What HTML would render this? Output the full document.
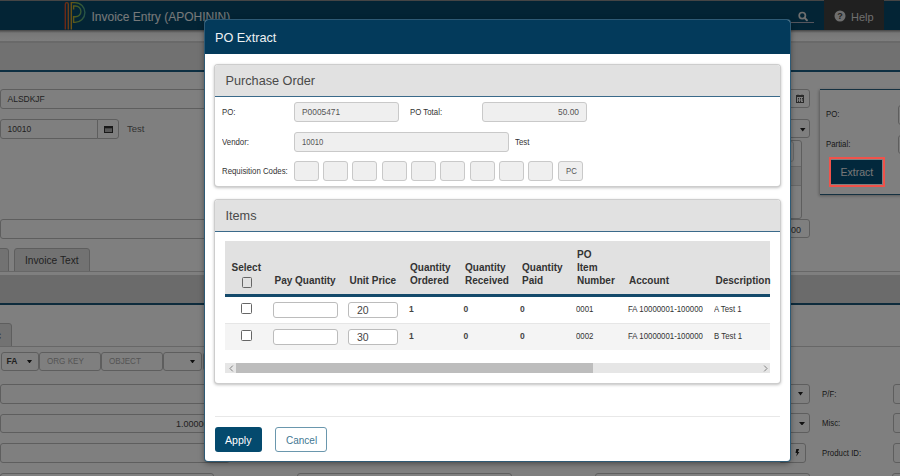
<!DOCTYPE html>
<html><head><meta charset="utf-8">
<style>
*{box-sizing:border-box;margin:0;padding:0}
html,body{width:900px;height:476px;overflow:hidden;background:#fff;font-family:"Liberation Sans",sans-serif}
.a{position:absolute}
.t{position:absolute;line-height:1;white-space:nowrap}
#page{position:absolute;left:0;top:0;width:900px;height:476px;background:#fff;overflow:hidden}
#overlay{position:absolute;left:0;top:0;width:900px;height:476px;background:rgba(0,0,0,0.5)}
#modal{position:absolute;left:205px;top:20px;width:585px;height:441px;background:#fff;border-radius:3px;box-shadow:0 0 0 1px #2e5a75,0 2px 6px rgba(0,0,0,0.5);overflow:hidden}
</style></head><body>
<div id="page">
<div class="a" style="left:0px;top:0px;width:900px;height:30px;background:#06496a;border-top:1px solid #8a8a8a"></div>
<div class="a" style="left:824px;top:0px;width:60px;height:30px;background:#404040"></div>
<svg class="a" style="left:60px;top:0px" width="40" height="32" viewBox="0 0 40 32">
<defs><linearGradient id="lg" x1="4" y1="0" x2="26" y2="0" gradientUnits="userSpaceOnUse">
<stop offset="0" stop-color="#d8412f"/><stop offset="0.18" stop-color="#d9702c"/><stop offset="0.36" stop-color="#d2aa2a"/><stop offset="0.6" stop-color="#8ab848"/><stop offset="1" stop-color="#45a89a"/></linearGradient></defs>
<g fill="none" stroke="url(#lg)" stroke-width="1.4">
<path d="M5.3 29.5V4.2Q5.3 2.6 6.8 2.6Q8.3 2.6 8.3 4.2V29.5"/>
<path d="M11.3 29.5V2.6H15A9.9 9.9 0 0 1 15 22.4H13.6V16.8H15.5A5.4 5.4 0 0 0 15.5 6H13.6V9.5"/>
</g></svg>
<div class="t" style="left:91.5px;top:11px;font-size:12px;font-weight:normal;color:#eef2f4;">Invoice Entry (APOHININ)</div>
<svg class="a" style="left:796px;top:9px" width="14" height="14" viewBox="0 0 14 14"><circle cx="6.3" cy="6.6" r="3.1" fill="none" stroke="#ddd" stroke-width="1.7"/><path d="M8.6 8.9L10.9 11.2" stroke="#ddd" stroke-width="2" stroke-linecap="round"/></svg>
<div class="a" style="left:788px;top:22px;width:26px;height:1px;background:#aab"></div>
<svg class="a" style="left:834px;top:10px" width="12" height="12" viewBox="0 0 12 12"><circle cx="6" cy="6" r="5.5" fill="#ddd"/><text x="6" y="9.3" font-family="Liberation Sans" font-weight="bold" font-size="9" text-anchor="middle" fill="#454545">?</text></svg>
<div class="t" style="left:851px;top:12px;font-size:11px;font-weight:normal;color:#ddd;">Help</div>
<div class="a" style="left:0px;top:30px;width:900px;height:11px;background:linear-gradient(#8a8a8a,#eeeeee 3px,#fcfcfc)"></div>
<div class="a" style="left:0px;top:41px;width:900px;height:2px;background:#d2d2d2"></div>
<div class="a" style="left:0px;top:43px;width:900px;height:27px;background:#e2e2e2"></div>
<div class="a" style="left:0px;top:70px;width:900px;height:1.5px;background:#1b5e84"></div>
<div class="a" style="left:0px;top:89px;width:230px;height:20px;background:#fff;border:1px solid #bdbdbd;border-radius:3px"></div>
<div class="t" style="left:7.5px;top:95px;font-size:8.5px;font-weight:normal;color:#444;">ALSDKJF</div>
<div class="a" style="left:0px;top:119px;width:98px;height:20px;background:#fff;border:1px solid #bdbdbd;border-radius:3px 0 0 3px"></div>
<div class="t" style="left:7.5px;top:125px;font-size:8.5px;font-weight:normal;color:#444;">10010</div>
<div class="a" style="left:97px;top:119px;width:22px;height:20px;background:#fff;border:1px solid #bdbdbd;border-radius:0 3px 3px 0"></div>
<svg class="a" style="left:103.5px;top:125.5px" width="9" height="7" viewBox="0 0 9 7"><rect x="0.5" y="0.5" width="8" height="6" fill="#b0b0b0" stroke="#333" stroke-width="1"/><rect x="0.5" y="0.5" width="8" height="1.8" fill="#333"/></svg>
<div class="t" style="left:127px;top:124px;font-size:9.5px;font-weight:normal;color:#666;">Test</div>
<div class="a" style="left:0px;top:219px;width:230px;height:20px;background:#fff;border:1px solid #bdbdbd;border-radius:3px"></div>
<div class="a" style="left:-10px;top:248px;width:19px;height:24px;background:#e4e4e4;border:1px solid #bdbdbd;border-radius:3px 3px 0 0"></div>
<div class="a" style="left:14px;top:248px;width:76px;height:24px;background:#e4e4e4;border:1px solid #bdbdbd;border-radius:3px 3px 0 0"></div>
<div class="t" style="left:25px;top:256px;font-size:10.2px;font-weight:normal;color:#444;">Invoice Text</div>
<div class="a" style="left:0px;top:271px;width:900px;height:1px;background:#cfcfcf"></div>
<div class="a" style="left:0px;top:275px;width:900px;height:29px;background:#d6d6d6"></div>
<div class="a" style="left:0px;top:303px;width:900px;height:2px;background:#1b5678"></div>
<div class="a" style="left:-10px;top:323px;width:22px;height:24px;background:#e4e4e4;border:1px solid #bdbdbd;border-radius:3px 3px 0 0"></div>
<div class="t" style="left:-4px;top:331px;font-size:10px;font-weight:normal;color:#444;">c</div>
<div class="a" style="left:0px;top:346px;width:900px;height:1px;background:#cfcfcf"></div>
<div class="a" style="left:1px;top:351.5px;width:38px;height:19px;background:#fff;border:1px solid #bdbdbd;border-radius:3px"></div>
<div class="t" style="left:6.5px;top:356.5px;font-size:8.5px;font-weight:bold;color:#444;">FA</div>
<svg class="a" style="left:27px;top:359.5px" width="5" height="3.5" viewBox="0 0 5 3.5"><path d="M0 0H5L2.5 3.5Z" fill="#222"/></svg>
<div class="a" style="left:39px;top:351.5px;width:62px;height:19px;background:#fff;border:1px solid #bdbdbd;border-radius:3px"></div>
<div class="t" style="left:47px;top:356.5px;font-size:8.5px;font-weight:normal;color:#aaa;transform:scaleX(0.95);transform-origin:0 0;">ORG KEY</div>
<div class="a" style="left:101px;top:351.5px;width:62px;height:19px;background:#fff;border:1px solid #bdbdbd;border-radius:3px"></div>
<div class="t" style="left:109px;top:356.5px;font-size:8.5px;font-weight:normal;color:#aaa;transform:scaleX(0.95);transform-origin:0 0;">OBJECT</div>
<div class="a" style="left:163px;top:351.5px;width:39px;height:19px;background:#fff;border:1px solid #bdbdbd;border-radius:3px"></div>
<svg class="a" style="left:190px;top:359.5px" width="5" height="3.5" viewBox="0 0 5 3.5"><path d="M0 0H5L2.5 3.5Z" fill="#222"/></svg>
<div class="a" style="left:203px;top:351.5px;width:20px;height:19px;background:#fff;border:1px solid #bdbdbd;border-radius:3px"></div>
<div class="a" style="left:0px;top:384px;width:230px;height:19.5px;background:#fff;border:1px solid #bdbdbd;border-radius:3px"></div>
<div class="a" style="left:0px;top:413.5px;width:230px;height:19px;background:#fff;border:1px solid #bdbdbd;border-radius:3px"></div>
<div class="t" style="left:176px;top:420px;font-size:9px;font-weight:normal;color:#444;">1.000000</div>
<div class="a" style="left:0px;top:443px;width:230px;height:19.5px;background:#fff;border:1px solid #bdbdbd;border-radius:3px"></div>
<div class="a" style="left:0px;top:472.5px;width:214px;height:20px;background:#fff;border:1px solid #bdbdbd;border-radius:3px"></div>
<div class="a" style="left:780px;top:89px;width:30px;height:19px;background:#fff;border:1px solid #bdbdbd;border-radius:0 3px 3px 0"></div>
<svg class="a" style="left:796px;top:94px" width="8" height="9" viewBox="0 0 8 9"><rect x="0.5" y="1.5" width="7" height="7" fill="none" stroke="#555" stroke-width="1"/><rect x="0.5" y="1.5" width="7" height="1.5" fill="#555"/><path d="M2 4.5h1M4 4.5h1M6 4.5h1M2 6h1M4 6h1M6 6h1M2 7.5h1M4 7.5h1" stroke="#555" stroke-width="1"/><path d="M2 0.5v1.5M6 0.5v1.5" stroke="#555" stroke-width="1"/></svg>
<div class="a" style="left:780px;top:119px;width:30px;height:19px;background:#fff;border:1px solid #bdbdbd;border-radius:0 3px 3px 0"></div>
<svg class="a" style="left:800px;top:128px" width="5.5" height="3.5" viewBox="0 0 5.5 3.5"><path d="M0 0H5.5L2.75 3.5Z" fill="#222"/></svg>
<div class="a" style="left:770px;top:139.5px;width:32px;height:79px;background:#fff;border:1px solid #bdbdbd;border-radius:0 3px 3px 0"></div>
<div class="a" style="left:770px;top:140.5px;width:24px;height:21.5px;background:#fff;border:1px solid #d0d0d0;border-radius:3px"></div>
<div class="a" style="left:770px;top:166px;width:31px;height:20px;background:#ececec;border-top:1px solid #d0d0d0;border-bottom:1px solid #d0d0d0"></div>
<div class="a" style="left:780px;top:219px;width:30px;height:19px;background:#fff;border:1px solid #bdbdbd;border-radius:0 3px 3px 0"></div>
<div class="t" style="left:791px;top:226px;font-size:9px;font-weight:normal;color:#444;">00</div>
<div class="a" style="left:820px;top:89px;width:100px;height:106px;background:#fff;border-top:1.5px solid #2a6282;border-bottom:1.5px solid #2a6282;box-shadow:-1px 1px 3px rgba(0,0,0,0.3)"></div>
<div class="t" style="left:826px;top:110px;font-size:9px;font-weight:normal;color:#333;transform:scaleX(0.87);transform-origin:0 0;">PO:</div>
<div class="a" style="left:898px;top:105px;width:20px;height:19.5px;background:#fff;border:1px solid #bdbdbd;border-radius:3px"></div>
<div class="t" style="left:826px;top:140px;font-size:9px;font-weight:normal;color:#333;transform:scaleX(0.87);transform-origin:0 0;">Partial:</div>
<div class="a" style="left:898px;top:135px;width:20px;height:19px;background:#fff;border:1px solid #bdbdbd;border-radius:3px"></div>
<div class="a" style="left:831px;top:159.5px;width:51px;height:24.5px;background:#045078"></div>
<div class="t" style="left:840.5px;top:167px;font-size:10.5px;font-weight:normal;color:#eee;">Extract</div>
<div class="a" style="left:780px;top:384px;width:30px;height:20px;background:#fff;border:1px solid #bdbdbd;border-radius:0 3px 3px 0"></div>
<svg class="a" style="left:798px;top:392px" width="5" height="3.5" viewBox="0 0 5 3.5"><path d="M0 0H5L2.5 3.5Z" fill="#222"/></svg>
<div class="t" style="left:821.5px;top:389.5px;font-size:9px;font-weight:normal;color:#333;transform:scaleX(0.87);transform-origin:0 0;">P/F:</div>
<div class="a" style="left:893px;top:384px;width:20px;height:20px;background:#fff;border:1px solid #bdbdbd;border-radius:3px"></div>
<div class="a" style="left:780px;top:413px;width:30px;height:20px;background:#fff;border:1px solid #bdbdbd;border-radius:0 3px 3px 0"></div>
<svg class="a" style="left:799px;top:421.5px" width="6" height="3.5" viewBox="0 0 6 3.5"><path d="M0 0H6L3.0 3.5Z" fill="#222"/></svg>
<div class="t" style="left:821.5px;top:418.5px;font-size:9px;font-weight:normal;color:#333;transform:scaleX(0.87);transform-origin:0 0;">Misc:</div>
<div class="a" style="left:893px;top:413px;width:20px;height:20px;background:#fff;border:1px solid #bdbdbd;border-radius:3px"></div>
<div class="a" style="left:780px;top:443px;width:26px;height:20px;background:#fff;border:1px solid #bdbdbd;border-radius:0 3px 3px 0"></div>
<svg class="a" style="left:794.8px;top:448.8px" width="5" height="8" viewBox="0 0 5 8"><path d="M1.3 0H4.1L2.9 2.9H4.4L1.2 7.6L2 4.1H0.5Z" fill="#222"/></svg>
<div class="t" style="left:821.5px;top:448.5px;font-size:9px;font-weight:normal;color:#333;transform:scaleX(0.87);transform-origin:0 0;">Product ID:</div>
<div class="a" style="left:893px;top:443px;width:20px;height:20px;background:#fff;border:1px solid #bdbdbd;border-radius:3px"></div>
<div class="a" style="left:595px;top:472.5px;width:215px;height:20px;background:#fff;border:1px solid #bdbdbd;border-radius:3px"></div>
<div class="a" style="left:892px;top:472.5px;width:30px;height:20px;background:#fff;border:1px solid #bdbdbd;border-radius:3px"></div>
<div class="a" style="left:297px;top:472.5px;width:215px;height:20px;background:#fff;border:1px solid #bdbdbd;border-radius:3px"></div>
</div>
<div id="overlay"></div>
<div class="a" style="left:828.5px;top:156.5px;width:56px;height:30px;border:2.5px solid #f0524a"></div>
<div id="modal">
<div class="a" style="left:0px;top:0px;width:585px;height:34px;background:#033a5b"></div>
<div class="t" style="left:10px;top:12px;font-size:12.7px;font-weight:normal;color:#eef1f3;">PO Extract</div>
<div class="a" style="left:10px;top:45px;width:564.5px;height:120.5px;background:#fff;border-radius:3px;box-shadow:0 0 0 1px #cdcdcd,0 1px 3px 1px rgba(0,0,0,0.25)"></div>
<div class="a" style="left:10px;top:45px;width:564.5px;height:32px;background:#e1e1e1;border-bottom:1.5px solid #3a6a8a;border-radius:3px 3px 0 0"></div>
<div class="t" style="left:20.5px;top:55px;font-size:12.7px;font-weight:normal;color:#4a4a4a;">Purchase Order</div>
<div class="t" style="left:17px;top:88px;font-size:9px;font-weight:normal;color:#333;transform:scaleX(0.87);transform-origin:0 0;">PO:</div>
<div class="a" style="left:88.5px;top:82px;width:105px;height:20px;background:#efefef;border:1px solid #c9c9c9;border-radius:3px"></div>
<div class="t" style="left:96.5px;top:88px;font-size:9px;font-weight:normal;color:#555;transform:scaleX(0.93);transform-origin:0 0;">P0005471</div>
<div class="t" style="left:205px;top:88px;font-size:9px;font-weight:normal;color:#333;transform:scaleX(0.87);transform-origin:0 0;">PO Total:</div>
<div class="a" style="left:277px;top:82px;width:105px;height:20px;background:#efefef;border:1px solid #c9c9c9;border-radius:3px"></div>
<div class="t" style="left:352.5px;top:88px;font-size:9px;font-weight:normal;color:#555;transform:scaleX(0.93);transform-origin:0 0;">50.00</div>
<div class="t" style="left:17px;top:117.5px;font-size:9px;font-weight:normal;color:#333;transform:scaleX(0.87);transform-origin:0 0;">Vendor:</div>
<div class="a" style="left:88.5px;top:112px;width:215px;height:19.5px;background:#efefef;border:1px solid #c9c9c9;border-radius:3px"></div>
<div class="t" style="left:96.5px;top:117.5px;font-size:9px;font-weight:normal;color:#555;transform:scaleX(0.85);transform-origin:0 0;">10010</div>
<div class="t" style="left:310px;top:117.5px;font-size:9px;font-weight:normal;color:#333;transform:scaleX(0.87);transform-origin:0 0;">Test</div>
<div class="t" style="left:17px;top:147px;font-size:9px;font-weight:normal;color:#333;transform:scaleX(0.87);transform-origin:0 0;">Requisition Codes:</div>
<div class="a" style="left:88.5px;top:141px;width:25px;height:20px;background:#efefef;border:1px solid #c9c9c9;border-radius:3px"></div>
<div class="a" style="left:118.0px;top:141px;width:25px;height:20px;background:#efefef;border:1px solid #c9c9c9;border-radius:3px"></div>
<div class="a" style="left:147.0px;top:141px;width:25px;height:20px;background:#efefef;border:1px solid #c9c9c9;border-radius:3px"></div>
<div class="a" style="left:176.5px;top:141px;width:25px;height:20px;background:#efefef;border:1px solid #c9c9c9;border-radius:3px"></div>
<div class="a" style="left:206.0px;top:141px;width:25px;height:20px;background:#efefef;border:1px solid #c9c9c9;border-radius:3px"></div>
<div class="a" style="left:235.0px;top:141px;width:25px;height:20px;background:#efefef;border:1px solid #c9c9c9;border-radius:3px"></div>
<div class="a" style="left:264.5px;top:141px;width:25px;height:20px;background:#efefef;border:1px solid #c9c9c9;border-radius:3px"></div>
<div class="a" style="left:294.0px;top:141px;width:25px;height:20px;background:#efefef;border:1px solid #c9c9c9;border-radius:3px"></div>
<div class="a" style="left:323.0px;top:141px;width:25px;height:20px;background:#efefef;border:1px solid #c9c9c9;border-radius:3px"></div>
<div class="a" style="left:352.5px;top:141px;width:25px;height:20px;background:#efefef;border:1px solid #c9c9c9;border-radius:3px"></div>
<div class="t" style="left:361px;top:146.5px;font-size:9px;font-weight:normal;color:#555;transform:scaleX(0.87);transform-origin:0 0;">PC</div>
<div class="a" style="left:10px;top:179.5px;width:564.5px;height:183px;background:#fff;border-radius:3px;box-shadow:0 0 0 1px #cdcdcd,0 1px 3px 1px rgba(0,0,0,0.25)"></div>
<div class="a" style="left:10px;top:179.5px;width:564.5px;height:32px;background:#e1e1e1;border-bottom:1.5px solid #3a6a8a;border-radius:3px 3px 0 0"></div>
<div class="t" style="left:20.5px;top:189.5px;font-size:12.7px;font-weight:normal;color:#4a4a4a;">Items</div>
<div class="a" style="left:20px;top:221px;width:545px;height:53px;background:#e1e1e1"></div>
<div class="a" style="left:20px;top:273.5px;width:545px;height:3px;background:#144a6b"></div>
<div class="t" style="left:26.5px;top:243px;font-size:10px;font-weight:bold;color:#333;">Select</div>
<div class="a" style="left:36.5px;top:257px;width:10.5px;height:10.5px;background:transparent;border:1.3px solid #666;border-radius:1.5px"></div>
<div class="t" style="left:69.5px;top:256px;font-size:10px;font-weight:bold;color:#333;">Pay Quantity</div>
<div class="t" style="left:144.5px;top:256px;font-size:10px;font-weight:bold;color:#333;">Unit Price</div>
<div class="t" style="left:205px;top:243px;font-size:10px;font-weight:bold;color:#333;">Quantity</div>
<div class="t" style="left:205px;top:256px;font-size:10px;font-weight:bold;color:#333;">Ordered</div>
<div class="t" style="left:260px;top:243px;font-size:10px;font-weight:bold;color:#333;">Quantity</div>
<div class="t" style="left:260px;top:256px;font-size:10px;font-weight:bold;color:#333;">Received</div>
<div class="t" style="left:317px;top:243px;font-size:10px;font-weight:bold;color:#333;">Quantity</div>
<div class="t" style="left:317px;top:256px;font-size:10px;font-weight:bold;color:#333;">Paid</div>
<div class="t" style="left:372px;top:230px;font-size:10px;font-weight:bold;color:#333;">PO</div>
<div class="t" style="left:372px;top:243px;font-size:10px;font-weight:bold;color:#333;">Item</div>
<div class="t" style="left:372px;top:256px;font-size:10px;font-weight:bold;color:#333;">Number</div>
<div class="t" style="left:424px;top:256px;font-size:10px;font-weight:bold;color:#333;">Account</div>
<div class="t" style="left:510.5px;top:256px;font-size:10px;font-weight:bold;color:#333;">Description</div>
<div class="a" style="left:20px;top:303px;width:545px;height:27px;background:#f4f4f4;border-top:1px solid #e6e6e6"></div>
<div class="a" style="left:36px;top:283px;width:10.5px;height:10.5px;background:#fff;border:1.3px solid #666;border-radius:1.5px"></div>
<div class="a" style="left:67.5px;top:281.5px;width:65px;height:16px;background:#fff;border:1px solid #bcbcbc;border-radius:3px"></div>
<div class="a" style="left:143px;top:282px;width:50px;height:16px;background:#fff;border:1px solid #bcbcbc;border-radius:3px"></div>
<div class="t" style="left:152px;top:285px;font-size:10.5px;font-weight:normal;color:#444;">20</div>
<div class="t" style="left:204px;top:285px;font-size:8.5px;font-weight:bold;color:#444;">1</div>
<div class="t" style="left:258.5px;top:285px;font-size:8.5px;font-weight:bold;color:#444;">0</div>
<div class="t" style="left:315px;top:285px;font-size:8.5px;font-weight:bold;color:#444;">0</div>
<div class="t" style="left:370.5px;top:285px;font-size:9px;font-weight:normal;color:#333;transform:scaleX(0.87);transform-origin:0 0;">0001</div>
<div class="t" style="left:422.5px;top:285px;font-size:9px;font-weight:normal;color:#333;transform:scaleX(0.87);transform-origin:0 0;">FA 10000001-100000</div>
<div class="t" style="left:508.5px;top:285px;font-size:9px;font-weight:normal;color:#333;transform:scaleX(0.87);transform-origin:0 0;">A Test 1</div>
<div class="a" style="left:36px;top:310px;width:10.5px;height:10.5px;background:#fff;border:1.3px solid #666;border-radius:1.5px"></div>
<div class="a" style="left:67.5px;top:308.5px;width:65px;height:16px;background:#fff;border:1px solid #bcbcbc;border-radius:3px"></div>
<div class="a" style="left:143px;top:309px;width:50px;height:16px;background:#fff;border:1px solid #bcbcbc;border-radius:3px"></div>
<div class="t" style="left:152px;top:312px;font-size:10.5px;font-weight:normal;color:#444;">30</div>
<div class="t" style="left:204px;top:311.5px;font-size:8.5px;font-weight:bold;color:#444;">1</div>
<div class="t" style="left:258.5px;top:311.5px;font-size:8.5px;font-weight:bold;color:#444;">0</div>
<div class="t" style="left:315px;top:311.5px;font-size:8.5px;font-weight:bold;color:#444;">0</div>
<div class="t" style="left:370.5px;top:311.5px;font-size:9px;font-weight:normal;color:#333;transform:scaleX(0.87);transform-origin:0 0;">0002</div>
<div class="t" style="left:422.5px;top:311.5px;font-size:9px;font-weight:normal;color:#333;transform:scaleX(0.87);transform-origin:0 0;">FA 10000001-100000</div>
<div class="t" style="left:508.5px;top:311.5px;font-size:9px;font-weight:normal;color:#333;transform:scaleX(0.87);transform-origin:0 0;">B Test 1</div>
<div class="a" style="left:20px;top:343px;width:545px;height:10px;background:#e6e6e6"></div>
<div class="a" style="left:30.5px;top:343px;width:357px;height:10px;background:#bdbdbd"></div>
<svg class="a" style="left:23.5px;top:344.5px" width="5" height="7" viewBox="0 0 5 7"><path d="M3.8 0.6L1 3.5L3.8 6.4" fill="none" stroke="#777" stroke-width="0.9"/></svg>
<svg class="a" style="left:557.5px;top:345px" width="5" height="7" viewBox="0 0 5 7"><path d="M1.2 0.6L4 3.5L1.2 6.4" fill="none" stroke="#777" stroke-width="0.9"/></svg>
<div class="a" style="left:10px;top:396px;width:565px;height:1px;background:#e8e8e8"></div>
<div class="a" style="left:10px;top:407px;width:46.5px;height:24.8px;background:#044a6e;border-radius:3px"></div>
<div class="t" style="left:20px;top:415px;font-size:10.6px;font-weight:normal;color:#fff;">Apply</div>
<div class="a" style="left:69.5px;top:407px;width:52.5px;height:24.8px;background:#fff;border:1px solid #6a97ad;border-radius:3px"></div>
<div class="t" style="left:81px;top:416px;font-size:10px;font-weight:normal;color:#427792;">Cancel</div>
</div>
</body></html>
